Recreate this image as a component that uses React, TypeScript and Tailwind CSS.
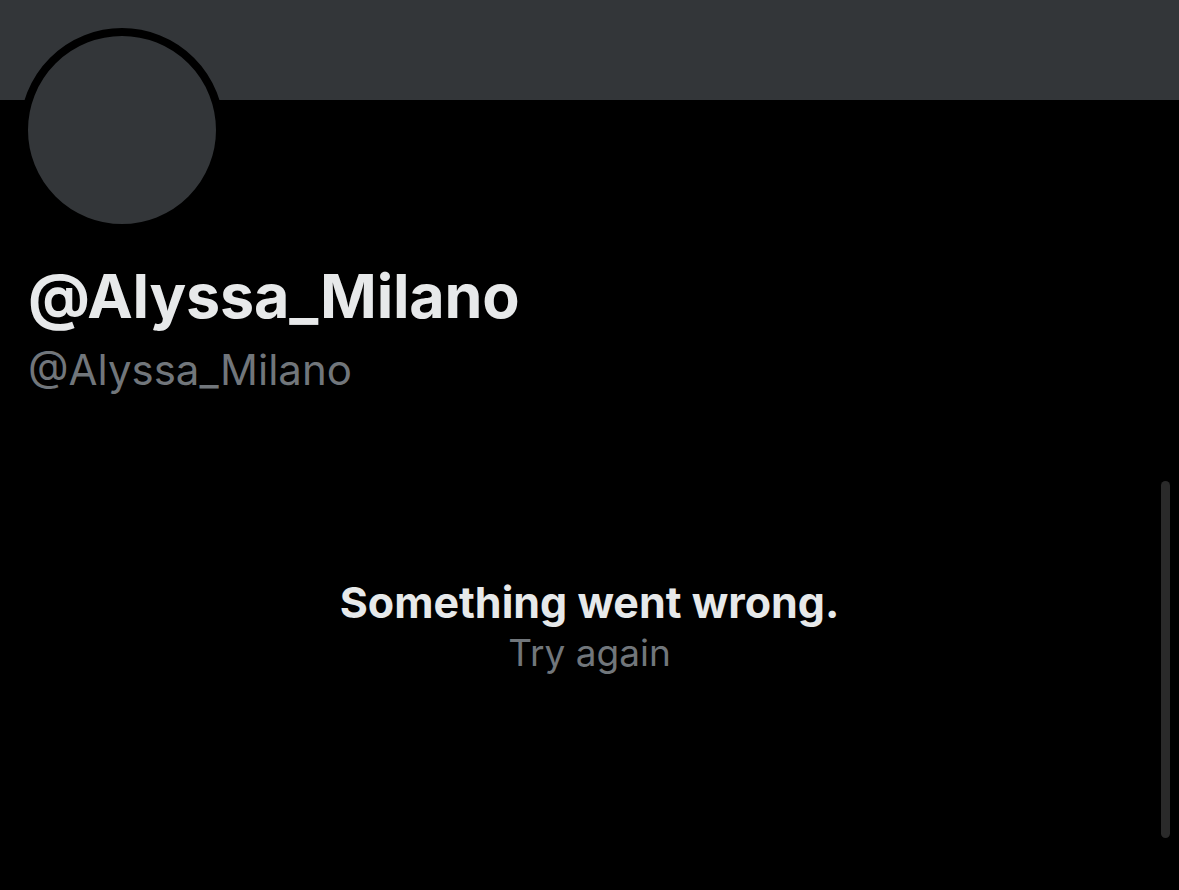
import React from "react";

export default function App() {
  return (
    <div
      className="relative w-[1179px] h-[890px] bg-black overflow-hidden"
      style={{ fontFamily: "Inter, 'Noto Sans', sans-serif" }}
    >
      {/* banner */}
      <div className="h-[100px] bg-[#333639]" />

      {/* avatar */}
      <div className="ml-[20px] -mt-[72px] w-[204px] h-[204px] rounded-full border-[8px] border-black bg-[#333639]" />

      {/* names */}
      <div className="pl-[28px] mt-[28px]">
        <h1 className="text-[61px] leading-[72px] font-bold text-[#e7e9ea] tracking-[-0.2px]">
          @Alyssa_Milano
        </h1>
        <p className="text-[42px] leading-[48px] text-[#71767b] mt-[14px]">@Alyssa_Milano</p>
      </div>

      {/* error */}
      <div className="mt-[182px] flex flex-col items-center">
        <p className="text-[43px] leading-[52px] font-bold text-[#e7e9ea]">
          Something went wrong.
        </p>
        <button className="text-[37px] leading-[44px] text-[#71767b] mt-[3px]">Try again</button>
      </div>

      {/* scrollbar */}
      <div className="absolute left-[1161px] top-[481px] w-[9px] h-[357px] rounded-full bg-[#2a2a2a]" />
    </div>
  );
}
